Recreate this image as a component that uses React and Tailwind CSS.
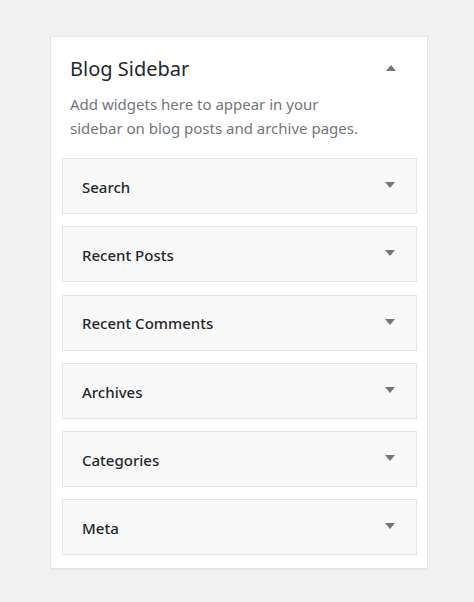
const widgets = ["Search", "Recent Posts", "Recent Comments", "Archives", "Categories", "Meta"];

const Arrow = ({ up }) => (
  <svg width="10" height="6" viewBox="0 0 10 6" className="shrink-0">
    <path d={up ? "M5 0L10 6H0Z" : "M0 0H10L5 6Z"} fill="#72777c" />
  </svg>
);

export default function App() {
  return (
    <div
      className="min-h-[602px] w-full bg-[#f1f1f1] pt-[36px] pl-[50px]"
      style={{ fontFamily: '"Noto Sans", "Open Sans", sans-serif' }}
    >
      <div className="w-[378px] bg-white border border-[#e5e5e5] shadow-[0_1px_1px_rgba(0,0,0,0.04)] pl-[11px] pr-[10px] pb-[13px]">
        {/* Header */}
        <div className="pl-[8px] pr-[21px] pt-[18px]">
          <div className="flex items-center justify-between">
            <h2 className="text-[20px] leading-[28px] text-[#23282d]">Blog Sidebar</h2>
            <div className="-mt-[3px]">
              <Arrow up />
            </div>
          </div>
          <p className="mt-[9px] text-[15px] leading-[24px] text-[#72777c]">
            Add widgets here to appear in your
            <br />
            sidebar on blog posts and archive pages.
          </p>
        </div>

        {/* Widgets */}
        <div className="mt-[18px] flex flex-col gap-[12.3px]">
          {widgets.map((w) => (
            <div
              key={w}
              className="h-[56px] flex items-center justify-between bg-[#f9f9f9] border border-[#e5e5e5] pl-[19px] pr-[21px]"
            >
              <span className="text-[15px] font-medium text-[#23282d] mt-[2px]">{w}</span>
              <div className="-mt-[2px]">
                <Arrow />
              </div>
            </div>
          ))}
        </div>
      </div>
    </div>
  );
}
